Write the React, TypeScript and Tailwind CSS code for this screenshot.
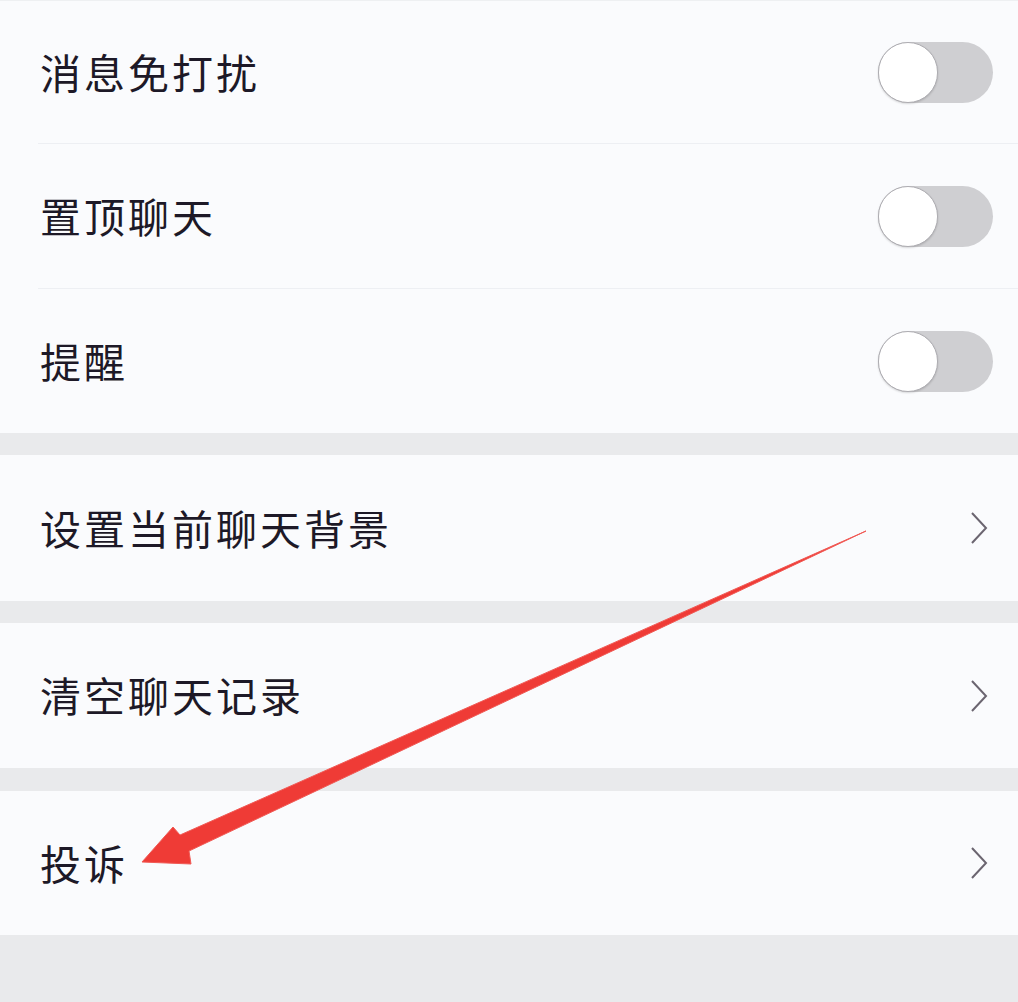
type Row = { label: string; kind: 'toggle' | 'link'; h: string }

function Toggle() {
  return (
    <div className="relative h-[61px] w-[115px] rounded-full bg-[#cfcfd2]">
      <div className="absolute left-0 top-0 h-[61px] w-[60px] rounded-full border border-[#aeadb2] bg-white shadow-[0_1px_2px_rgba(0,0,0,0.15)]" />
    </div>
  )
}

function SettingRow({ label, kind, h }: Row) {
  return (
    <div className={`flex items-center justify-between bg-[#fafbfd] pl-[40px] pr-[25px] ${h}`}>
      <span className="-mt-[2px] text-[41px] leading-none tracking-[3px] text-[#1d1927]">{label}</span>
      {kind === 'toggle' ? (
        <Toggle />
      ) : (
        <svg width="20" height="34" viewBox="0 0 20 34" className="mr-[4px]">
          <path d="M3 2 L17 17 L3 32" fill="none" stroke="#6b6570" strokeWidth="2" />
        </svg>
      )}
    </div>
  )
}

function Divider() {
  return (
    <div className="bg-[#fafbfd] pl-[38px]">
      <div className="h-px bg-[#edeff3]" />
    </div>
  )
}

export default function App() {
  return (
    <div
      className="relative h-[1002px] w-[1018px] overflow-hidden bg-[#e9eaec]"
      style={{ fontFamily: '"Noto Sans CJK SC", "Noto Sans", sans-serif' }}
    >
      <div className="h-px bg-[#eef0f2]" />
      <SettingRow label="消息免打扰" kind="toggle" h="h-[142px]" />
      <Divider />
      <SettingRow label="置顶聊天" kind="toggle" h="h-[144px]" />
      <Divider />
      <SettingRow label="提醒" kind="toggle" h="h-[144px]" />
      <div className="h-[22px]" />
      <SettingRow label="设置当前聊天背景" kind="link" h="h-[146px]" />
      <div className="h-[22px]" />
      <SettingRow label="清空聊天记录" kind="link" h="h-[145px]" />
      <div className="h-[23px]" />
      <SettingRow label="投诉" kind="link" h="h-[144px]" />

      {/* annotation arrow */}
      <svg className="pointer-events-none absolute left-0 top-0" width="1018" height="1002">
        <polygon
          points="142,862 173,827 180,835 866,531 189,851 191,864"
          fill="#ef3b36"
          stroke="#f05a55"
          strokeWidth="1"
          strokeLinejoin="round"
        />
      </svg>
    </div>
  )
}
